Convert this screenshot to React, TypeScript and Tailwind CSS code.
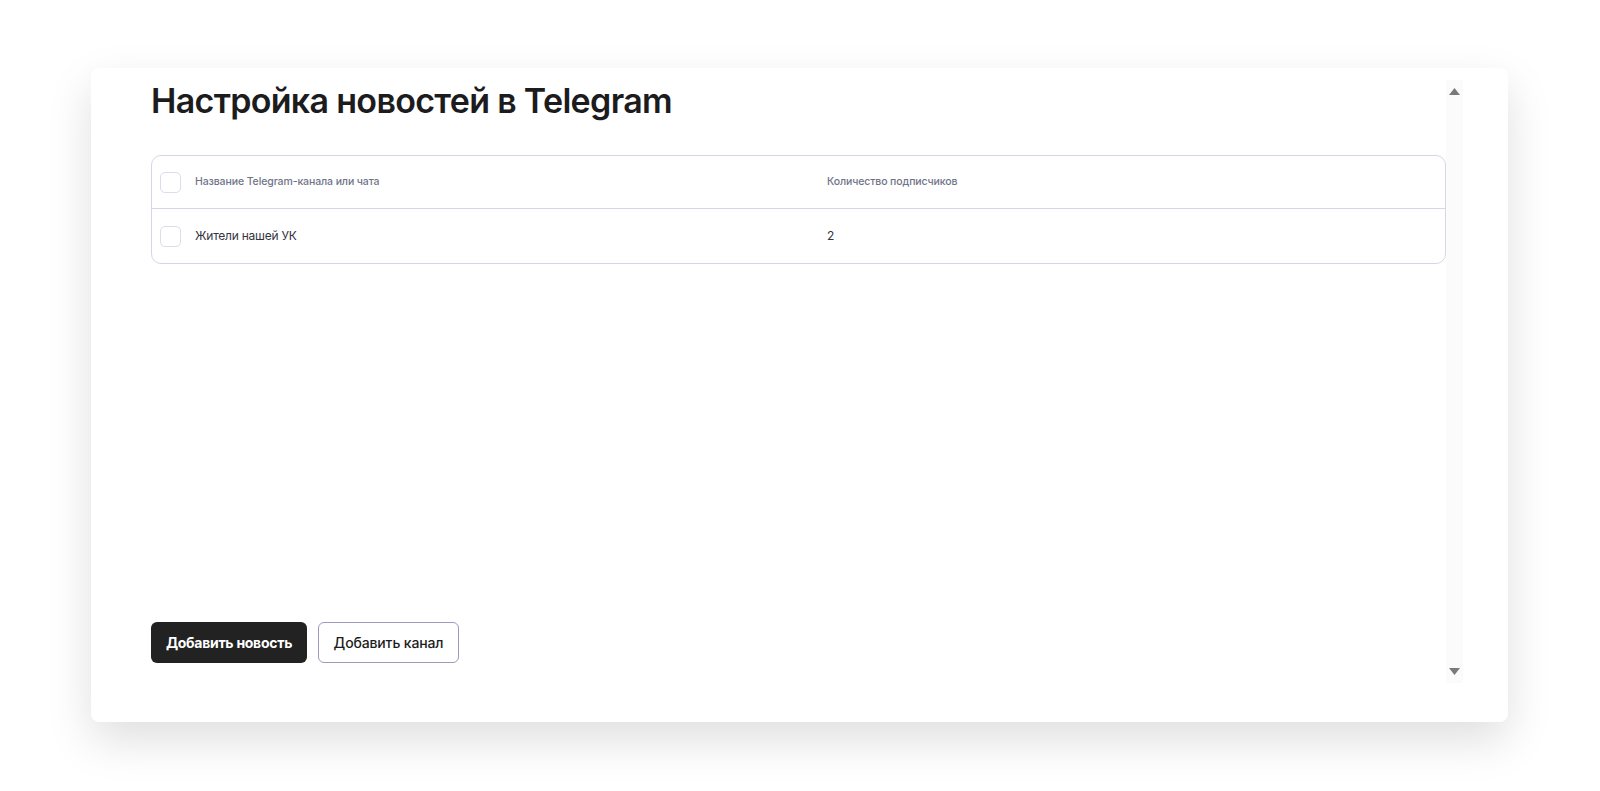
const font = { fontFamily: 'Inter, "Noto Sans", sans-serif' };

function Checkbox() {
  return <div className="h-[21px] w-[21px] shrink-0 rounded-[5px] border border-[#dcdcea] bg-white" />;
}

export default function App() {
  return (
    <main className="min-h-screen bg-white pl-[91px] pt-[68px]" style={font}>
      <div className="flex h-[654px] w-[1417px] rounded-[8px] bg-white pt-[12px] pb-[39px] shadow-[0_18px_45px_rgba(0,0,0,0.13)]">
        <div className="flex flex-1 flex-col pl-[60px] pb-[20px]">
          <h1 className="text-[34px] leading-[41px] font-semibold tracking-[-0.02em] text-[#1c1c1e]">
            Настройка новостей в Telegram
          </h1>

          <div className="mt-[34px] rounded-[10px] border border-[#d6d6ea]">
            <div className="flex h-[53px] items-center border-b border-[#d6d6ea]">
              <div className="w-[43px] pl-[8px]"><Checkbox /></div>
              <div className="w-[632px] text-[10.5px] font-medium tracking-[-0.01em] text-[#6f7489]">Название Telegram-канала или чата</div>
              <div className="text-[10.5px] font-medium tracking-[-0.01em] text-[#6f7489]">Количество подписчиков</div>
            </div>
            <div className="flex h-[54px] items-center">
              <div className="w-[43px] pl-[8px]"><Checkbox /></div>
              <div className="w-[632px] text-[12px] tracking-[-0.02em] text-[#34343f]">Жители нашей УК</div>
              <div className="text-[12px] text-[#34343f]">2</div>
            </div>
          </div>

          <div className="mt-auto flex gap-[11px]">
            <button className="h-[41px] w-[156px] rounded-[6px] bg-[#222222] text-[14px] font-bold tracking-[-0.02em] text-white">
              Добавить новость
            </button>
            <button className="h-[41px] w-[141px] rounded-[6px] border border-[#9a9cbc] bg-white text-[14px] font-medium tracking-[-0.01em] text-[#1c1c1e]">
              Добавить канал
            </button>
          </div>
        </div>

        <div className="flex w-[17px] flex-col items-center justify-between bg-[#fbfbfb] py-[8px]">
          <svg width="11" height="7" viewBox="0 0 11 7"><path d="M5.5 0 L11 7 L0 7 Z" fill="#7a7a7a" /></svg>
          <svg width="11" height="7" viewBox="0 0 11 7"><path d="M0 0 L11 0 L5.5 7 Z" fill="#7a7a7a" /></svg>
        </div>
        <div className="w-[45px]" />
      </div>
    </main>
  );
}
